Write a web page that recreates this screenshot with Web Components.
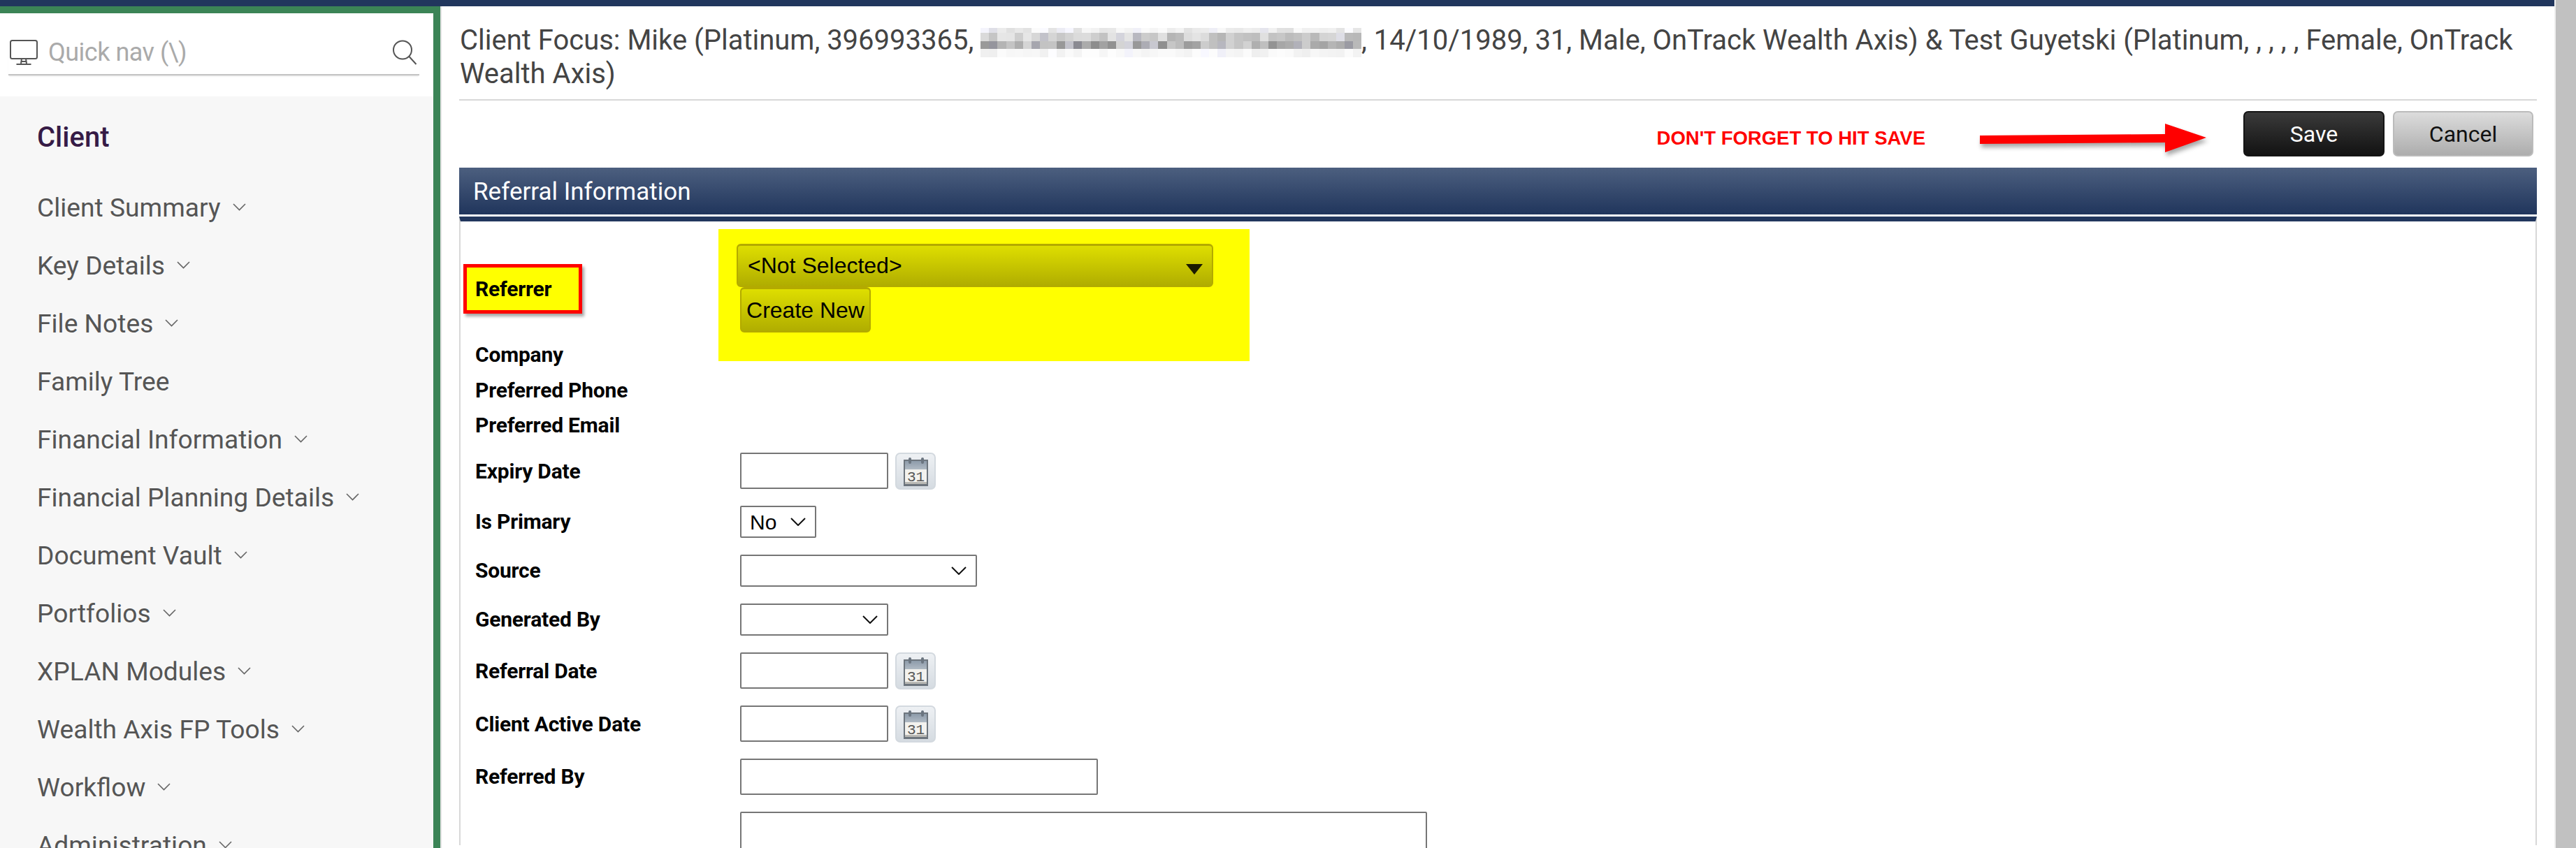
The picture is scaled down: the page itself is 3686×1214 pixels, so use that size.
<!DOCTYPE html>
<html>
<head>
<meta charset="utf-8">
<title>Referral Information</title>
<style>
  html, body { margin: 0; height: 1214px; overflow: hidden; background: #fff; }
  body { font-family: Roboto, "Liberation Sans", sans-serif; }
</style>
</head>
<body>
<app-shell>
  <side-nav slot="side">
    <nav-item>Client Summary</nav-item>
    <nav-item>Key Details</nav-item>
    <nav-item>File Notes</nav-item>
    <nav-item plain>Family Tree</nav-item>
    <nav-item>Financial Information</nav-item>
    <nav-item>Financial Planning Details</nav-item>
    <nav-item>Document Vault</nav-item>
    <nav-item>Portfolios</nav-item>
    <nav-item>XPLAN Modules</nav-item>
    <nav-item>Wealth Axis FP Tools</nav-item>
    <nav-item>Workflow</nav-item>
    <nav-item>Administration</nav-item>
  </side-nav>
  <client-title></client-title>
  <action-bar></action-bar>
  <section-head>Referral Information</section-head>
  <referral-form></referral-form>
</app-shell>

<script>
const calendarIcon = `
  <svg viewBox="0 0 58 53" width="58" height="53">
    <defs>
      <linearGradient id="cal" x1="0" y1="0" x2="0" y2="1">
        <stop offset="0" stop-color="#eef1f4"/><stop offset="1" stop-color="#d5dbe1"/>
      </linearGradient>
      <linearGradient id="band" x1="0" y1="0" x2="0" y2="1">
        <stop offset="0" stop-color="#8d9baa"/><stop offset="1" stop-color="#b0bac4"/>
      </linearGradient>
    </defs>
    <rect x="1" y="1" width="56" height="51" rx="6" fill="url(#cal)" stroke="#d3d9df" stroke-width="2"/>
    <rect x="12" y="10" width="35" height="38" fill="#6d757d"/>
    <rect x="14" y="12" width="31" height="12" fill="url(#band)"/>
    <rect x="14" y="24" width="31" height="18" fill="#f3f2ee"/>
    <rect x="14" y="42" width="31" height="3" fill="#b8b8b4"/>
    <rect x="19" y="7" width="4" height="9" rx="2" fill="#6b7580"/>
    <rect x="37" y="7" width="4" height="9" rx="2" fill="#6b7580"/>
    <text x="29.5" y="41" text-anchor="middle" font-family="'Liberation Mono', monospace" font-size="21" fill="#555">31</text>
  </svg>`;

class AppShell extends HTMLElement {
  constructor() {
    super();
    this.attachShadow({mode: 'open'});
    this.shadowRoot.innerHTML = `
    <style>
      :host { display: flex; height: 1214px; overflow: hidden; }
      .wrap { flex: 0 0 3655px; min-width: 0; }
      .bar { flex: 1; background: #c1c1c1; border-left: 2px solid #efefef; }
      .top { height: 9px; background: #21365d; }
      .row { display: flex; height: 1205px; }
      .side { flex: 0 0 632px; }
      main { flex: 1; padding: 0 25px; min-width: 0; }
    </style>
    <div class="wrap">
      <div class="top"></div>
      <div class="row">
        <div class="side"><slot name="side"></slot></div>
        <main><slot></slot></main>
      </div>
    </div>
    <div class="bar"></div>
    `;
  }
}

class SideNav extends HTMLElement {
  constructor() {
    super();
    this.attachShadow({mode: 'open'});
    this.shadowRoot.innerHTML = `
    <style>
      :host {
        display: block;
        height: 1205px;
        box-sizing: border-box;
        border-top: 10px solid #3b8456;
        border-right: 10px solid #3b8456;
        box-shadow: 2px 0 0 #e3e3e3;
        width: 630px;
        background: #f7f7f7;
        overflow: hidden;
      }
      .search {
        background: #fff;
        height: 119px;
        box-sizing: border-box;
        padding: 37px 20px 0 14px;
      }
      .box {
        display: flex;
        align-items: center;
        height: 52px;
        box-sizing: border-box;
        margin-left: -2px;
        padding-left: 2px;
        border-bottom: 2px solid #c4c4c4;
        box-shadow: 0 2px 2px -1px #e0e0e0;
        padding-bottom: 12px;
      }
      .box span { flex: 1; margin-left: 15px; color: #aaa; font-size: 36px; letter-spacing: -.5px; }
      .box svg:last-child { margin-right: 3px; }
      h2 {
        margin: 0;
        padding: 36px 0 0 53px;
        font-size: 40px;
        line-height: 46px;
        font-weight: 500;
        color: #361b46;
      }
      .items { padding: 35px 0 0 53px; }
    </style>
    <div class="search">
      <div class="box">
        <svg width="40" height="36" viewBox="0 0 40 36" fill="none" stroke="#555" stroke-width="2">
          <rect x="1" y="1" width="38" height="26" rx="2.5"/>
          <path d="M17 27l-1 7M23 27l1 7M16.500 31h7M9.500 35h21"/>
        </svg>
        <span>Quick nav (\\)</span>
        <svg width="36" height="36" viewBox="0 0 36 36" fill="none" stroke="#555" stroke-width="2">
          <circle cx="15" cy="14.500" r="13"/>
          <path d="M24.500 24l10 11"/>
        </svg>
      </div>
    </div>
    <h2>Client</h2>
    <div class="items"><slot></slot></div>
    `;
  }
}

class NavItem extends HTMLElement {
  constructor() {
    super();
    this.attachShadow({mode: 'open'});
    const chevron = this.hasAttribute('plain') ? '' : `
      <svg width="19" height="11" viewBox="0 0 19 11" fill="none" stroke="#666" stroke-width="1.6">
        <path d="M1 1l8.500 8.500L18 1"/>
      </svg>`;
    this.shadowRoot.innerHTML = `
    <style>
      :host {
        display: flex;
        align-items: center;
        gap: 17px;
        height: 83px;
        font-size: 37.2px;
        color: #555;
        white-space: nowrap;
      }
    </style>
    <slot></slot>${chevron}
    `;
  }
}

class ClientTitle extends HTMLElement {
  constructor() {
    super();
    this.attachShadow({mode: 'open'});
    // blurred-out email in the screenshot, drawn as a mosaic of grey blocks
    const rows = [[7, 238, 30], [12, 205, 50], [11, 178, 80], [12, 246, 14]];
    let cells = '';
    let seed = 17;
    rows.forEach(([h, base, spread]) => {
      for (let i = 0; i < 45; i++) {
        seed = (seed * 73 + 41) % 101;
        const g = Math.min(255, Math.round(base - spread / 2 + seed / 100 * spread));
        cells += `<i style="background:rgb(${g},${g},${g + (seed % 7 === 0 ? 8 : 0)})"></i>`;
      }
    });
    this.shadowRoot.innerHTML = `
    <style>
      :host {
        display: block;
        height: 135px;
        box-sizing: border-box;
        padding-top: 25px;
        border-bottom: 2px solid #d8d8d8;
        font-size: 40px;
        line-height: 48px;
        color: #444;
      }
      .blur {
        display: inline-grid;
        grid-template-columns: repeat(45, 12.11px);
        grid-template-rows: 7px 12px 11px 12px;
        vertical-align: top;
        margin-top: 6px;
        filter: blur(.6px);
      }
      p { margin: 0 0 0 1px; letter-spacing: -.01px; }
    </style>
    <p>Client Focus: Mike (Platinum, 396993365, <span class="blur">${cells}</span>, 14/10/1989, 31, Male, OnTrack Wealth Axis) &amp; Test Guyetski (Platinum, , , , , Female, OnTrack<br>Wealth Axis)</p>
    `;
  }
}

class ActionBar extends HTMLElement {
  constructor() {
    super();
    this.attachShadow({mode: 'open'});
    this.shadowRoot.innerHTML = `
    <style>
      :host {
        display: flex;
        align-items: flex-start;
        height: 96px;
        padding-top: 15px;
        box-sizing: border-box;
        justify-content: flex-end;
      }
      .note {
        font: bold 27.500px "Liberation Sans", sans-serif;
        color: #f00;
        margin: 23px 78px 0 0;
        white-space: nowrap;
      }
      .arrow { margin: 18px 53px 0 0; filter: drop-shadow(2px 5px 3px rgba(0,0,0,.35)); }
      button {
        width: 202px;
        height: 65px;
        box-sizing: border-box;
        font: 32px Roboto, sans-serif;
        border-radius: 7px;
        padding: 1px 0 0;
      }
      .save {
        color: #fff;
        background: linear-gradient(#3a3a3a, #121212);
        border: 2px solid #141414;
      }
      .cancel {
        width: 201px;
        margin: 0 5px 0 12px;
        color: #111;
        background: linear-gradient(#dcdcdc, #adadad);
        border: 2px solid #bbb;
      }
    </style>
    <span class="note">DON'T FORGET TO HIT SAVE</span>
    <svg class="arrow" width="324" height="42" viewBox="0 0 324 42">
      <path d="M0 17L265 15V0L324 20L265 41V27L0 29Z" fill="#f00"/>
    </svg>
    <button class="save">Save</button>
    <button class="cancel">Cancel</button>
    `;
  }
}

class SectionHead extends HTMLElement {
  constructor() {
    super();
    this.attachShadow({mode: 'open'});
    this.shadowRoot.innerHTML = `
    <style>
      :host {
        display: flex;
        align-items: center;
        height: 67px;
        box-sizing: border-box;
        padding: 2px 0 0 20px;
        background: linear-gradient(#4c5f7f, #20355c);
        color: #fff;
        font-size: 35px;
        margin-bottom: 3px;
      }
    </style>
    <slot></slot>
    `;
  }
}

class ReferralForm extends HTMLElement {
  constructor() {
    super();
    this.attachShadow({mode: 'open'});
    this.shadowRoot.innerHTML = `
    <style>
      :host {
        display: block;
        border-top: 7px solid #21365d;
        border-left: 2px solid #d8d8d8;
        border-right: 2px solid #d8d8d8;
        height: 900px;
        box-sizing: border-box;
        padding-left: 4px;
        color: #000;
      }
      .head { display: flex; height: 316px; }
      .left { flex: 0 0 396px; padding-top: 61px; box-sizing: border-box; }
      .grid {
        display: grid;
        grid-template-columns: 396px 1fr;
        align-items: center;
      }
      .label { font-size: 30px; font-weight: 700; padding-left: 17px; white-space: nowrap; letter-spacing: -.2px; }
      .left .label { height: 50.5px; line-height: 50.5px; }
      .left .ref {
        width: 170px;
        height: 71px;
        box-sizing: border-box;
        padding-left: 12px;
        line-height: 61px;
        background: #ff0;
        border: 5px solid #f00;
        box-shadow: 3px 4px 4px rgba(0,0,0,.35);
        margin-bottom: 34px;
      }
      .hl {
        margin: 11px 0 0 -31px;
        width: 760px;
        height: 189px;
        box-sizing: border-box;
        background: #ff0;
        padding: 21px 0 0 26px;
      }
      .drop, .make {
        box-sizing: border-box;
        background: linear-gradient(#dede00, #b0ad00);
        border: 2px solid #b3aa00;
        border-top-width: 3px;
        border-radius: 6px;
        font: 32px "Liberation Sans", sans-serif;
      }
      .drop {
        display: flex;
        align-items: center;
        justify-content: space-between;
        width: 682px;
        height: 62px;
        padding: 0 13px 0 14px;
      }
      .tri { width: 0; height: 0; border: 12px solid transparent; border-top: 15px solid #1a1a00; border-bottom: 0; margin-top: 10px; }
      .make { display: block; width: 187px; height: 65px; margin-left: 5px; padding: 0; color: #000; }
      .ctl { display: flex; gap: 10px; align-items: flex-start; }
      .fld, select {
        box-sizing: border-box;
        border: 2px solid #767676;
        border-radius: 2px;
        background: #fff;
        margin: 0;
      }
      .fld { height: 52px; }
      .w212 { width: 212px; }
      select {
        height: 46px;
        font: 30px "Liberation Sans", sans-serif;
        color: #000;
        appearance: none;
        padding-left: 12px;
        background-repeat: no-repeat;
        background-image: url("data:image/svg+xml,%3Csvg xmlns='http://www.w3.org/2000/svg' width='22' height='12'%3E%3Cpath d='M1 1l10 10L21 1' fill='none' stroke='%23111' stroke-width='2'/%3E%3C/svg%3E");
        background-position: right 13px center;
      }
      .tall { height: 100px; width: 983px; }
    </style>
    <div class="head">
      <div class="left">
        <div class="label ref">Referrer</div>
        <div class="label">Company</div>
        <div class="label">Preferred Phone</div>
        <div class="label">Preferred Email</div>
      </div>
      <div class="hl">
        <div class="drop"><span>&lt;Not Selected&gt;</span><i class="tri"></i></div>
        <button class="make">Create New</button>
      </div>
    </div>
    <div class="grid">
      <div class="label" style="height:53px;line-height:53px;margin-top:15px">Expiry Date</div>
      <div class="ctl" style="margin-top:15px"><div class="fld w212"></div>${calendarIcon}</div>

      <div class="label" style="height:46px;line-height:46px;margin-top:23px">Is Primary</div>
      <div class="ctl" style="margin-top:23px"><select style="width:109px"><option>No</option></select></div>

      <div class="label" style="height:46px;line-height:46px;margin-top:24px">Source</div>
      <div class="ctl" style="margin-top:24px"><select style="width:339px"></select></div>

      <div class="label" style="height:46px;line-height:46px;margin-top:24px">Generated By</div>
      <div class="ctl" style="margin-top:24px"><select style="width:212px"></select></div>

      <div class="label" style="height:53px;line-height:53px;margin-top:24px">Referral Date</div>
      <div class="ctl" style="margin-top:24px"><div class="fld w212"></div>${calendarIcon}</div>

      <div class="label" style="height:53px;line-height:53px;margin-top:23px">Client Active Date</div>
      <div class="ctl" style="margin-top:23px"><div class="fld w212"></div>${calendarIcon}</div>

      <div class="label" style="height:52px;line-height:52px;margin-top:23px">Referred By</div>
      <div class="ctl" style="margin-top:23px"><div class="fld" style="width:512px"></div></div>

      <div></div>
      <div class="ctl" style="margin-top:24px"><div class="fld tall"></div></div>
    </div>
    `;
  }
}

customElements.define('app-shell', AppShell);
customElements.define('side-nav', SideNav);
customElements.define('nav-item', NavItem);
customElements.define('client-title', ClientTitle);
customElements.define('action-bar', ActionBar);
customElements.define('section-head', SectionHead);
customElements.define('referral-form', ReferralForm);
</script>
</body>
</html>
